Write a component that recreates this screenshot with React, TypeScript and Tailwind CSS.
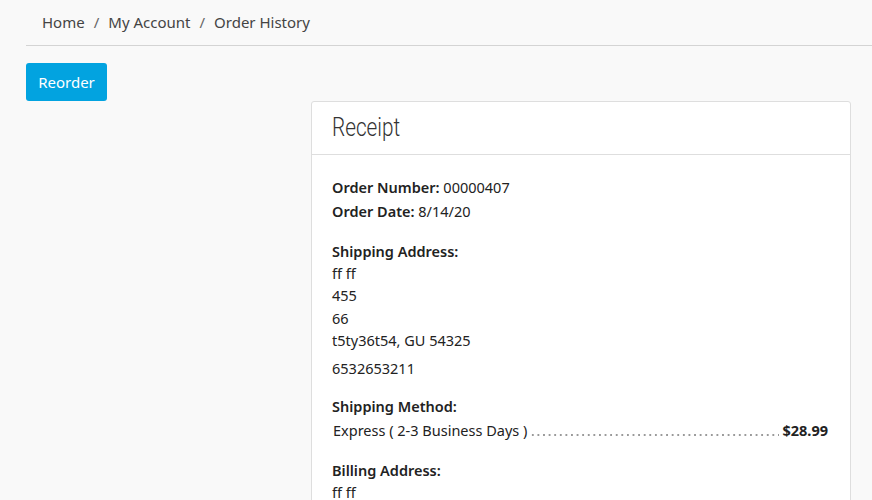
export default function App() {
  const shippingLines = ["ff ff", "455", "66", "t5ty36t54, GU 54325"];

  return (
    <div className="min-h-[500px] w-[872px] overflow-hidden bg-[#f9f9f9] font-['Noto_Sans',sans-serif] text-[#222]">
      <div className="pl-[26px]">
        <nav className="flex h-[46px] items-center gap-[9px] border-b border-[#d4d4d4] pl-4 text-[15px] text-[#444]">
          <span>Home</span>
          <span className="text-[#666]">/</span>
          <span>My Account</span>
          <span className="text-[#666]">/</span>
          <span>Order History</span>
        </nav>

        <button className="mt-[17px] h-[38px] w-[81px] rounded-[3px] bg-[#02a3e0] text-[15px] text-white">
          Reorder
        </button>

        <div className="flex justify-end pr-[21px]">
          <div className="w-[540px] rounded-[3px] border border-[#dedede] bg-white">
            <div className="flex h-[53px] items-center border-b border-[#dedede] px-5">
              <h2 className="inline-block origin-left scale-x-[0.83] font-['Roboto',sans-serif] text-[25px] font-light text-[#333]">
                Receipt
              </h2>
            </div>

            <div className="pl-5 pr-[22px] pt-[20px] text-[14.5px] text-[#222]">
              <div className="leading-[24px]">
                <div>
                  <b className="font-semibold">Order Number:</b> 00000407
                </div>
                <div>
                  <b className="font-semibold">Order Date:</b> 8/14/20
                </div>
              </div>

              <div className="mt-[17px] leading-[22.2px]">
                <div className="font-semibold">Shipping Address:</div>
                {shippingLines.map((l) => (
                  <div key={l}>{l}</div>
                ))}
                <div className="mt-[6px]">6532653211</div>
              </div>

              <div className="mt-[15px] leading-[24px]">
                <div className="font-semibold">Shipping Method:</div>
                <div className="flex items-baseline">
                  <span className="pl-px">Express ( 2-3 Business Days )</span>
                  <span className="mx-[3px] h-[2px] flex-1 bg-[radial-gradient(circle,#9a9a9a_0.9px,transparent_1.1px)] bg-[length:5.6px_2px] bg-repeat-x" />
                  <b className="font-bold">$28.99</b>
                </div>
              </div>

              <div className="mt-[17px] leading-[22.2px]">
                <div className="font-semibold">Billing Address:</div>
                <div>ff ff</div>
              </div>
            </div>
          </div>
        </div>
      </div>
    </div>
  );
}
